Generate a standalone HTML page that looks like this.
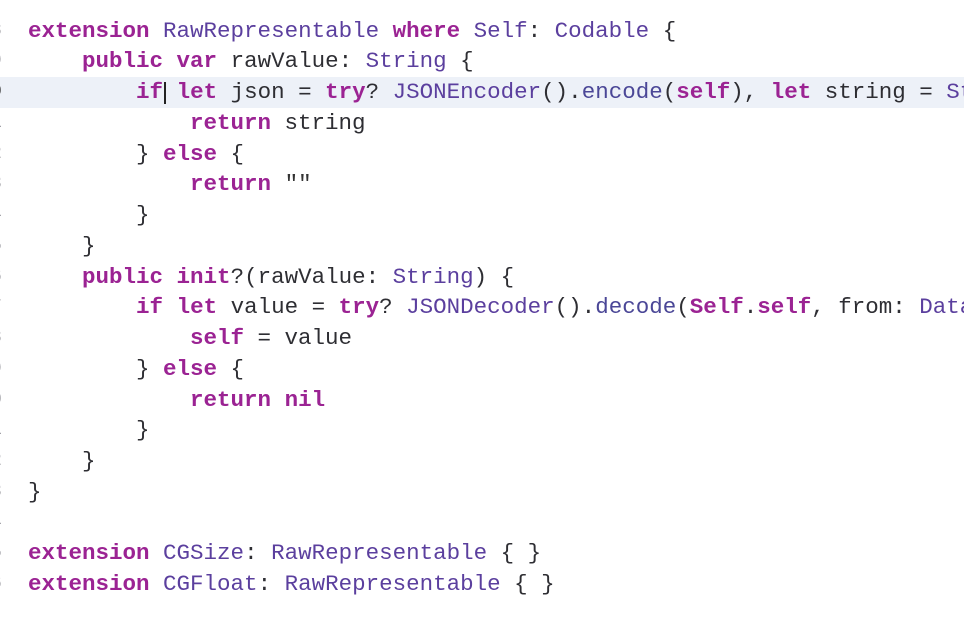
<!DOCTYPE html>
<html><head><style>
html,body{margin:0;width:964px;height:620px;overflow:hidden}
body{background:#fff;position:relative;font-family:"Liberation Mono",monospace;font-size:22.5px;color:#2e2e33}
.l{position:absolute;left:28px;height:30.75px;line-height:30.75px;white-space:pre;width:936px;overflow:hidden}
.n{position:absolute;left:-9px;color:#9a9aa0;font-size:18px;height:30.75px;line-height:30.75px}
.hl{position:absolute;left:0;top:77px;width:964px;height:31px;background:#edf1f8}
.k{color:#9b2393;font-weight:bold}
.t{color:#5b3f9e}
.m{color:#4b4797}
.s{color:#333}
</style></head><body>
<div class="hl"></div>
<div class="n" style="top:15.6px">8</div>
<div class="n" style="top:46.4px">9</div>
<div class="n" style="top:77.1px;color:#333">0</div>
<div class="n" style="top:107.9px">1</div>
<div class="n" style="top:138.6px">2</div>
<div class="n" style="top:169.4px">3</div>
<div class="n" style="top:200.1px">4</div>
<div class="n" style="top:230.9px">5</div>
<div class="n" style="top:261.6px">6</div>
<div class="n" style="top:292.4px">7</div>
<div class="n" style="top:323.1px">8</div>
<div class="n" style="top:353.9px">9</div>
<div class="n" style="top:384.6px">0</div>
<div class="n" style="top:415.4px">1</div>
<div class="n" style="top:446.1px">2</div>
<div class="n" style="top:476.9px">3</div>
<div class="n" style="top:507.6px">4</div>
<div class="n" style="top:538.4px">5</div>
<div class="n" style="top:569.1px">6</div>
<div class="l" style="top:15.6px"><span class="k">extension</span> <span class="t">RawRepresentable</span> <span class="k">where</span> <span class="t">Self</span>: <span class="t">Codable</span> {</div>
<div class="l" style="top:46.4px">    <span class="k">public</span> <span class="k">var</span> rawValue: <span class="t">String</span> {</div>
<div class="l" style="top:77.1px">        <span class="k">if</span> <span class="k">let</span> json = <span class="k">try</span>? <span class="t">JSONEncoder</span>().<span class="m">encode</span>(<span class="k">self</span>), <span class="k">let</span> string = <span class="t">String</span></div>
<div class="l" style="top:107.9px">            <span class="k">return</span> string</div>
<div class="l" style="top:138.6px">        } <span class="k">else</span> {</div>
<div class="l" style="top:169.4px">            <span class="k">return</span> <span class="s">""</span></div>
<div class="l" style="top:200.1px">        }</div>
<div class="l" style="top:230.9px">    }</div>
<div class="l" style="top:261.6px">    <span class="k">public</span> <span class="k">init</span>?(rawValue: <span class="t">String</span>) {</div>
<div class="l" style="top:292.4px">        <span class="k">if</span> <span class="k">let</span> value = <span class="k">try</span>? <span class="t">JSONDecoder</span>().<span class="m">decode</span>(<span class="k">Self</span>.<span class="k">self</span>, from: <span class="t">Data</span></div>
<div class="l" style="top:323.1px">            <span class="k">self</span> = value</div>
<div class="l" style="top:353.9px">        } <span class="k">else</span> {</div>
<div class="l" style="top:384.6px">            <span class="k">return</span> <span class="k">nil</span></div>
<div class="l" style="top:415.4px">        }</div>
<div class="l" style="top:446.1px">    }</div>
<div class="l" style="top:476.9px">}</div>
<div class="l" style="top:538.4px"><span class="k">extension</span> <span class="t">CGSize</span>: <span class="t">RawRepresentable</span> { }</div>
<div class="l" style="top:569.1px"><span class="k">extension</span> <span class="t">CGFloat</span>: <span class="t">RawRepresentable</span> { }</div>
<div style="position:absolute;left:164px;top:82px;width:2px;height:22px;background:#222"></div>
</body></html>
